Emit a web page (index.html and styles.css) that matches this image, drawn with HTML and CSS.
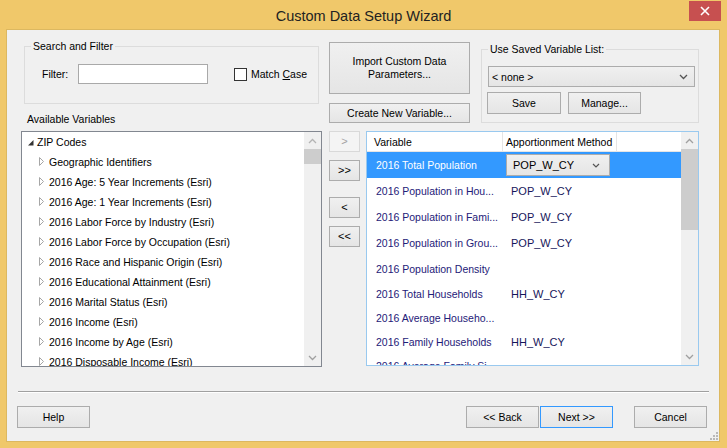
FILE: index.html
```html
<!DOCTYPE html>
<html>
<head>
<meta charset="utf-8">
<title>Custom Data Setup Wizard</title>
<link rel="stylesheet" href="styles.css">
</head>
<body>
<div class="window">
  <div class="titlebar">
    <div></div>
    <div class="title">Custom Data Setup Wizard</div>
    <div class="tb-right">
      <div class="close"><svg width="10" height="10" viewBox="0 0 10 10"><path d="M1 1 L9 9 M9 1 L1 9" stroke="#fff" stroke-width="1.6" fill="none"/></svg></div>
    </div>
  </div>
  <div class="client">
    <div class="top">
      <div class="left-col">
        <fieldset class="group search">
          <legend>Search and Filter</legend>
          <div class="filter-row">
            <span class="lbl">Filter:</span>
            <span class="input"></span>
            <span class="check"></span>
            <span class="check-lbl">Match <u>C</u>ase</span>
          </div>
        </fieldset>
        <div class="avail">Available Variables</div>
      </div>
      <div class="mid-col">
        <div class="btn import">Import Custom Data<br>Parameters...</div>
        <div class="btn create">Create New Variable...</div>
      </div>
      <fieldset class="group saved">
        <legend>Use Saved Variable List:</legend>
        <div class="combo">
          <span>&lt; none &gt;</span>
          <svg width="9" height="6" viewBox="0 0 9 6"><polyline points="1,1 4.5,4.5 8,1" stroke="#555" stroke-width="1.3" fill="none"/></svg>
        </div>
        <div class="saved-btns">
          <div class="btn save">Save</div>
          <div class="btn manage">Manage...</div>
        </div>
      </fieldset>
    </div>

    <div class="main">
      <div class="tree">
        <div class="tree-items">
          <div class="trow root"><span class="ticon"><svg width="6" height="6" viewBox="0 0 6 6"><polygon points="5.5,0 5.5,5.5 0,5.5" fill="#333"/></svg></span>ZIP Codes</div>
          <div class="trow child"><span class="ticon"><svg width="6" height="10" viewBox="0 0 6 10"><polygon points="0.5,0.5 4.5,4.5 0.5,8.5" fill="#fff" stroke="#a6a6a6"/></svg></span>Geographic Identifiers</div>
          <div class="trow child"><span class="ticon"><svg width="6" height="10" viewBox="0 0 6 10"><polygon points="0.5,0.5 4.5,4.5 0.5,8.5" fill="#fff" stroke="#a6a6a6"/></svg></span>2016 Age: 5 Year Increments (Esri)</div>
          <div class="trow child"><span class="ticon"><svg width="6" height="10" viewBox="0 0 6 10"><polygon points="0.5,0.5 4.5,4.5 0.5,8.5" fill="#fff" stroke="#a6a6a6"/></svg></span>2016 Age: 1 Year Increments (Esri)</div>
          <div class="trow child"><span class="ticon"><svg width="6" height="10" viewBox="0 0 6 10"><polygon points="0.5,0.5 4.5,4.5 0.5,8.5" fill="#fff" stroke="#a6a6a6"/></svg></span>2016 Labor Force by Industry (Esri)</div>
          <div class="trow child"><span class="ticon"><svg width="6" height="10" viewBox="0 0 6 10"><polygon points="0.5,0.5 4.5,4.5 0.5,8.5" fill="#fff" stroke="#a6a6a6"/></svg></span>2016 Labor Force by Occupation (Esri)</div>
          <div class="trow child"><span class="ticon"><svg width="6" height="10" viewBox="0 0 6 10"><polygon points="0.5,0.5 4.5,4.5 0.5,8.5" fill="#fff" stroke="#a6a6a6"/></svg></span>2016 Race and Hispanic Origin (Esri)</div>
          <div class="trow child"><span class="ticon"><svg width="6" height="10" viewBox="0 0 6 10"><polygon points="0.5,0.5 4.5,4.5 0.5,8.5" fill="#fff" stroke="#a6a6a6"/></svg></span>2016 Educational Attainment (Esri)</div>
          <div class="trow child"><span class="ticon"><svg width="6" height="10" viewBox="0 0 6 10"><polygon points="0.5,0.5 4.5,4.5 0.5,8.5" fill="#fff" stroke="#a6a6a6"/></svg></span>2016 Marital Status (Esri)</div>
          <div class="trow child"><span class="ticon"><svg width="6" height="10" viewBox="0 0 6 10"><polygon points="0.5,0.5 4.5,4.5 0.5,8.5" fill="#fff" stroke="#a6a6a6"/></svg></span>2016 Income (Esri)</div>
          <div class="trow child"><span class="ticon"><svg width="6" height="10" viewBox="0 0 6 10"><polygon points="0.5,0.5 4.5,4.5 0.5,8.5" fill="#fff" stroke="#a6a6a6"/></svg></span>2016 Income by Age (Esri)</div>
          <div class="trow child"><span class="ticon"><svg width="6" height="10" viewBox="0 0 6 10"><polygon points="0.5,0.5 4.5,4.5 0.5,8.5" fill="#fff" stroke="#a6a6a6"/></svg></span>2016 Disposable Income (Esri)</div>
        </div>
        <div class="vscroll">
          <div class="sbtn"><svg width="9" height="6" viewBox="0 0 9 6"><polyline points="1,5 4.5,1.5 8,5" stroke="#b4b4b4" stroke-width="1.3" fill="none"/></svg></div>
          <div class="thumb tree-thumb"></div>
          <div class="track"></div>
          <div class="sbtn"><svg width="9" height="6" viewBox="0 0 9 6"><polyline points="1,1 4.5,4.5 8,1" stroke="#a0a0a0" stroke-width="1.3" fill="none"/></svg></div>
        </div>
      </div>

      <div class="arrows">
        <div class="btn abtn disabled">&gt;</div>
        <div class="btn abtn a2">&gt;&gt;</div>
        <div class="btn abtn a3">&lt;</div>
        <div class="btn abtn a4">&lt;&lt;</div>
      </div>

      <div class="list">
        <div class="list-body">
          <div class="lhead">
            <div class="hc1">Variable</div>
            <div class="hc2">Apportionment Method</div>
          </div>
          <div class="lrow sel">
            <div class="c1">2016 Total Population</div>
            <div class="c2">
              <div class="cell-combo">
                <span>POP_W_CY</span>
                <svg width="8" height="5" viewBox="0 0 8 5"><polyline points="1,1 4,4 7,1" stroke="#555" stroke-width="1.2" fill="none"/></svg>
              </div>
            </div>
          </div>
          <div class="lrow"><div class="c1">2016 Population in Hou...</div><div class="c2 val">POP_W_CY</div></div>
          <div class="lrow"><div class="c1">2016 Population in Fami...</div><div class="c2 val">POP_W_CY</div></div>
          <div class="lrow"><div class="c1">2016 Population in Grou...</div><div class="c2 val">POP_W_CY</div></div>
          <div class="lrow"><div class="c1">2016 Population Density</div><div class="c2 val"></div></div>
          <div class="lrow short"><div class="c1">2016 Total Households</div><div class="c2 val">HH_W_CY</div></div>
          <div class="lrow short"><div class="c1">2016 Average Househo...</div><div class="c2 val"></div></div>
          <div class="lrow short"><div class="c1">2016 Family Households</div><div class="c2 val">HH_W_CY</div></div>
          <div class="lrow short"><div class="c1">2016 Average Family Si...</div><div class="c2 val"></div></div>
        </div>
        <div class="vscroll">
          <div class="sbtn"><svg width="9" height="6" viewBox="0 0 9 6"><polyline points="1,5 4.5,1.5 8,5" stroke="#a0a0a0" stroke-width="1.3" fill="none"/></svg></div>
          <div class="thumb list-thumb"></div>
          <div class="track"></div>
          <div class="sbtn"><svg width="9" height="6" viewBox="0 0 9 6"><polyline points="1,1 4.5,4.5 8,1" stroke="#a0a0a0" stroke-width="1.3" fill="none"/></svg></div>
        </div>
      </div>
    </div>

    <div class="sep"></div>

    <div class="footer">
      <div class="btn fbtn">Help</div>
      <div class="spacer"></div>
      <div class="btn fbtn">&lt;&lt; Back</div>
      <div class="btn fbtn next">Next &gt;&gt;</div>
      <div class="btn fbtn cancel">Cancel</div>
    </div>

    <div class="grip"><svg width="10" height="10" viewBox="0 0 10 10"><g fill="#b8b8b8"><rect x="8" y="2" width="2" height="2"/><rect x="5" y="5" width="2" height="2"/><rect x="8" y="5" width="2" height="2"/><rect x="2" y="8" width="2" height="2"/><rect x="5" y="8" width="2" height="2"/><rect x="8" y="8" width="2" height="2"/></g></svg></div>
  </div>
</div>
</body>
</html>
```

FILE: styles.css
```css
* { box-sizing: border-box; }
html, body { margin: 0; padding: 0; }
body {
  font-family: "Liberation Sans", Arial, sans-serif;
  font-size: 10.5px;
  color: #000;
  background: #f0c86a;
}
.window {
  width: 727px;
  height: 448px;
  background: #f0c86a;
  display: flex;
  flex-direction: column;
  overflow: hidden;
}
.titlebar {
  height: 30px;
  flex: none;
  display: grid;
  grid-template-columns: 1fr auto 1fr;
}
.title {
  font-size: 14.5px;
  color: #222;
  line-height: 30px;
  padding-top: 1px;
  white-space: nowrap;
}
.tb-right {
  display: flex;
  justify-content: flex-end;
  align-items: flex-start;
}
.close {
  width: 32px;
  height: 20px;
  margin: 1px 6px 0 0;
  background: #c75050;
  display: flex;
  align-items: center;
  justify-content: center;
}
.client {
  margin-left: 7px;
  width: 712px;
  height: 411px;
  background: #f0f0f0;
  position: relative;
  box-shadow: 0 0 0 1px #dcb860;
}

/* top area */
.top {
  display: flex;
  align-items: flex-start;
  height: 101px;
}
.left-col { margin-left: 14px; width: 300px; }
fieldset.group {
  margin: 0;
  padding: 0 6px;
  border: 1px solid #dcdcdc;
  min-width: 0;
}
legend {
  padding: 0 2px;
  line-height: 13px;
}
.search {
  margin-top: 10px !important;
  margin-left: 3px !important;
  width: 295px;
  height: 64px;
}
.filter-row {
  display: flex;
  align-items: center;
  padding-top: 11px;
  height: 31px;
}
.lbl { margin-left: 11px; width: 36px; }
.input {
  width: 130px;
  height: 20px;
  background: #fff;
  border: 1px solid #a9a9a9;
}
.check {
  width: 13px;
  height: 13px;
  margin-left: 26px;
  background: #fff;
  border: 1px solid #333;
}
.check-lbl { margin-left: 4px; }
.avail {
  margin: 9px 0 0 6px;
  line-height: 13px;
}

.btn {
  display: flex;
  align-items: center;
  justify-content: center;
  text-align: center;
  border: 1px solid #acacac;
  background: linear-gradient(#f0f0f0, #e5e5e5);
  line-height: 13px;
  white-space: nowrap;
}
.mid-col { margin-left: 8px; width: 141px; }
.import { margin-top: 12px; height: 52px; }
.create { margin-top: 9px; height: 20px; }

.saved {
  margin-top: 13px !important;
  margin-left: 11px !important;
  width: 218px;
  height: 80px;
  padding-right: 3px !important;
}
.combo {
  margin-top: 10px;
  height: 21px;
  border: 1px solid #acacac;
  background: linear-gradient(#f0f0f0, #e5e5e5);
  display: flex;
  align-items: center;
  justify-content: space-between;
  padding: 0 6px 0 3px;
}
.saved-btns {
  display: flex;
  margin-top: 5px;
}
.save { width: 74px; height: 22px; margin-left: -1px; }
.manage { width: 73px; height: 22px; margin-left: 7px; }

/* main area */
.main {
  display: flex;
  align-items: flex-start;
  height: 236px;
}
.tree {
  margin-left: 14px;
  width: 301px;
  height: 236px;
  border: 1px solid #828790;
  background: #fff;
  display: flex;
}
.tree-items {
  flex: 1;
  overflow: hidden;
}
.trow {
  height: 20px;
  display: flex;
  align-items: center;
  white-space: nowrap;
}
.root { padding-left: 5px; }
.root .ticon { width: 10px; display: flex; align-items: center; padding-left: 1px; padding-top: 1px; }
.child { padding-left: 16px; }
.child .ticon { width: 11px; display: flex; align-items: center; padding-left: 1px; }

.vscroll {
  width: 17px;
  flex: none;
  display: flex;
  flex-direction: column;
  background: #f0f0f0;
}
.sbtn {
  height: 17px;
  flex: none;
  display: flex;
  align-items: center;
  justify-content: center;
}
.thumb { background: #cdcdcd; flex: none; }
.tree-thumb { height: 15px; }
.list-thumb { height: 81px; }
.track { flex: 1; }

.arrows {
  margin-left: 7px;
  width: 31px;
  display: flex;
  flex-direction: column;
}
.abtn { height: 21px; font-size: 11px; }
.disabled {
  border-color: #d9d9d9;
  background: #f4f4f4;
  color: #a3a3a3;
}
.a2 { margin-top: 8px; }
.a3 { margin-top: 16px; }
.a4 { margin-top: 8px; }

.list {
  margin-left: 6px;
  width: 333px;
  height: 235px;
  border: 1px solid #99c9ef;
  background: #fff;
  display: flex;
}
.list-body {
  flex: 1;
  overflow: hidden;
}
.lhead {
  height: 20px;
  display: flex;
  border-bottom: 1px solid #e5e5e5;
}
.hc1, .hc2 {
  display: flex;
  align-items: center;
  border-right: 1px solid #e5e5e5;
  white-space: nowrap;
}
.hc1 { width: 136px; padding-left: 7px; }
.hc2 { width: 114px; padding-left: 3px; }
.lrow {
  height: 26px;
  display: flex;
  align-items: center;
  color: #1e2078;
  white-space: nowrap;
}
.lrow.short { height: 24px; }
.lrow.sel { background: #3399ff; color: #fff; }
.c1 { width: 136px; padding-left: 9px; overflow: hidden; }
.c2 { width: 114px; }
.val { padding-left: 8px; color: #15155a; }
.cell-combo {
  margin-left: 3px;
  width: 104px;
  height: 22px;
  border: 1px solid #acacac;
  background: linear-gradient(#f0f0f0, #e5e5e5);
  color: #000;
  font-size: 11px;
  display: flex;
  align-items: center;
  justify-content: space-between;
  padding: 0 9px 0 6px;
}
.val { font-size: 11px; }

/* footer */
.sep {
  margin: 24px 10px 0 11px;
  height: 2px;
  border-top: 1px solid #a0a0a0;
  border-bottom: 1px solid #fff;
}
.footer {
  display: flex;
  margin-top: 13px;
  padding: 0 12px 0 10px;
}
.fbtn { width: 73px; height: 22px; }
.spacer { flex: 1; }
.next { margin-left: 1px; border-color: #3399ff; }
.cancel { margin-left: 21px; }

.grip {
  position: absolute;
  right: 1px;
  bottom: 1px;
  width: 10px;
  height: 10px;
  display: flex;
}
```
